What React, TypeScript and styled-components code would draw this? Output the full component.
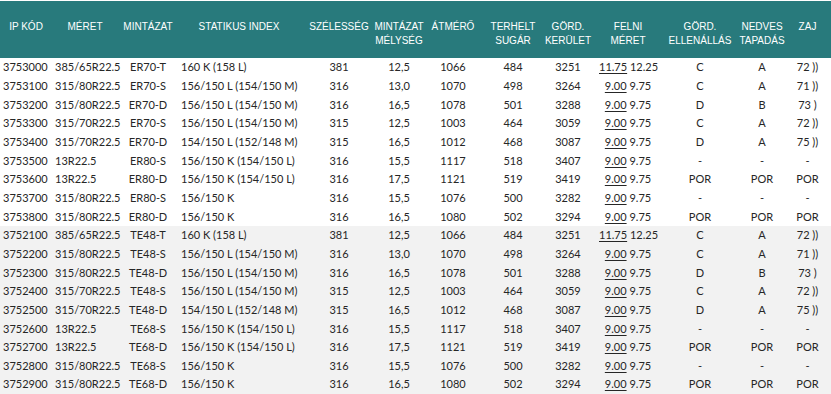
import React from 'react';
import styled, {createGlobalStyle} from 'styled-components';

type Row = {
  id: string;
  size: string;
  tread: string;
  index: string;
  width: string;
  depth: string;
  diameter: string;
  radius: string;
  circ: string;
  rim: string;
  rimAlt: string;
  roll: string;
  wet: string;
  noise: string;
};

const GlobalStyle = createGlobalStyle`
  html, body {
    margin: 0;
    padding: 0;
    background: #ffffff;
  }
`;

const base: Omit<Row, 'id' | 'tread'>[] = [
  {size: '385/65R22.5', index: '160 K (158 L)', width: '381', depth: '12,5', diameter: '1066', radius: '484', circ: '3251', rim: '11.75', rimAlt: '12.25', roll: 'C', wet: 'A', noise: '72 ))'},
  {size: '315/80R22.5', index: '156/150 L (154/150 M)', width: '316', depth: '13,0', diameter: '1070', radius: '498', circ: '3264', rim: '9.00', rimAlt: '9.75', roll: 'C', wet: 'A', noise: '71 ))'},
  {size: '315/80R22.5', index: '156/150 L (154/150 M)', width: '316', depth: '16,5', diameter: '1078', radius: '501', circ: '3288', rim: '9.00', rimAlt: '9.75', roll: 'D', wet: 'B', noise: '73 )'},
  {size: '315/70R22.5', index: '156/150 L (154/150 M)', width: '315', depth: '12,5', diameter: '1003', radius: '464', circ: '3059', rim: '9.00', rimAlt: '9.75', roll: 'C', wet: 'A', noise: '72 ))'},
  {size: '315/70R22.5', index: '154/150 L (152/148 M)', width: '315', depth: '16,5', diameter: '1012', radius: '468', circ: '3087', rim: '9.00', rimAlt: '9.75', roll: 'D', wet: 'A', noise: '75 ))'},
  {size: '13R22.5', index: '156/150 K (154/150 L)', width: '316', depth: '15,5', diameter: '1117', radius: '518', circ: '3407', rim: '9.00', rimAlt: '9.75', roll: '-', wet: '-', noise: '-'},
  {size: '13R22.5', index: '156/150 K (154/150 L)', width: '316', depth: '17,5', diameter: '1121', radius: '519', circ: '3419', rim: '9.00', rimAlt: '9.75', roll: 'POR', wet: 'POR', noise: 'POR'},
  {size: '315/80R22.5', index: '156/150 K', width: '316', depth: '15,5', diameter: '1076', radius: '500', circ: '3282', rim: '9.00', rimAlt: '9.75', roll: '-', wet: '-', noise: '-'},
  {size: '315/80R22.5', index: '156/150 K', width: '316', depth: '16,5', diameter: '1080', radius: '502', circ: '3294', rim: '9.00', rimAlt: '9.75', roll: 'POR', wet: 'POR', noise: 'POR'},
];

const erTreads = ['ER70-T', 'ER70-S', 'ER70-D', 'ER70-S', 'ER70-D', 'ER80-S', 'ER80-D', 'ER80-S', 'ER80-D'];
const teTreads = ['TE48-T', 'TE48-S', 'TE48-D', 'TE48-S', 'TE48-D', 'TE68-S', 'TE68-D', 'TE68-S', 'TE68-D'];

const groups: {shade: boolean; rows: Row[]}[] = [
  {shade: false, rows: base.map((r, i) => ({...r, id: String(3753000 + i * 100), tread: erTreads[i]}))},
  {shade: true, rows: base.map((r, i) => ({...r, id: String(3752100 + i * 100), tread: teTreads[i]}))},
];

const columns: {label: string[]; width: number}[] = [
  {label: ['IP KÓD'], width: 52},
  {label: ['MÉRET'], width: 66},
  {label: ['MINTÁZAT'], width: 60},
  {label: ['STATIKUS INDEX'], width: 122},
  {label: ['SZÉLESSÉG'], width: 78},
  {label: ['MINTÁZAT', 'MÉLYSÉG'], width: 42},
  {label: ['ÁTMÉRŐ'], width: 66},
  {label: ['TERHELT', 'SUGÁR'], width: 54},
  {label: ['GÖRD.', 'KERÜLET'], width: 56},
  {label: ['FELNI', 'MÉRET'], width: 64},
  {label: ['GÖRD.', 'ELLENÁLLÁS'], width: 80},
  {label: ['NEDVES', 'TAPADÁS'], width: 44},
  {label: ['ZAJ'], width: 47},
];

export default function App(): JSX.Element {
  return (
    <Page>
      <GlobalStyle />
      <Table>
        <colgroup>
          {columns.map((c, i) => (
            <col key={i} style={{width: c.width}} />
          ))}
        </colgroup>
        <thead>
          <tr>
            {columns.map((c, i) => (
              <HeadCell key={i}>
                <HeadLabel>
                  {c.label.map((l) => (
                    <span key={l}>{l}</span>
                  ))}
                </HeadLabel>
              </HeadCell>
            ))}
          </tr>
        </thead>
        {groups.map((g, gi) => (
          <tbody key={gi}>
            {g.rows.map((r) => (
              <BodyRow key={r.id} $shade={g.shade}>
                <Cell $align="left">{r.id}</Cell>
                <Cell $align="left">{r.size}</Cell>
                <Cell>{r.tread}</Cell>
                <Cell $align="left">{r.index}</Cell>
                <Cell>{r.width}</Cell>
                <Cell>{r.depth}</Cell>
                <Cell>{r.diameter}</Cell>
                <Cell>{r.radius}</Cell>
                <Cell>{r.circ}</Cell>
                <Cell>
                  <RimMain>{r.rim}</RimMain> {r.rimAlt}
                </Cell>
                <Cell>{r.roll}</Cell>
                <Cell>{r.wet}</Cell>
                <Cell>{r.noise}</Cell>
              </BodyRow>
            ))}
          </tbody>
        ))}
      </Table>
    </Page>
  );
}

const Page = styled.main`
  width: 831px;
  padding-top: 1px;
  background: #ffffff;
`;

const Table = styled.table`
  width: 831px;
  table-layout: fixed;
  border-collapse: collapse;
  border-spacing: 0;
`;

const HeadCell = styled.th`
  height: 57px;
  padding: 19px 0 0;
  vertical-align: top;
  background: #287a7c;
  color: #ffffff;
  font-family: 'Liberation Sans', Arial, sans-serif;
  font-size: 10px;
  font-weight: 400;
  line-height: 14px;
  white-space: nowrap;
  box-sizing: border-box;
`;

const HeadLabel = styled.div`
  display: flex;
  flex-direction: column;
  align-items: center;
`;

type CellProps = {$align?: 'left' | 'center'};
const Cell = styled.td<CellProps>`
  padding: 0 3px;
  text-align: ${(x) => x.$align ?? 'center'};
  vertical-align: middle;
  white-space: nowrap;
  overflow: visible;
`;

type RowProps = {$shade: boolean};
const BodyRow = styled.tr<RowProps>`
  height: 18.67px;
  background: ${(x) => (x.$shade ? '#f2f2f2' : '#ffffff')};
  color: #262626;
  font-family: Lato, 'Open Sans', sans-serif;
  font-size: 11px;
  line-height: 14px;
`;

const RimMain = styled.span`
  text-decoration: underline;
  text-decoration-thickness: 1px;
  text-underline-offset: 2px;
`;
